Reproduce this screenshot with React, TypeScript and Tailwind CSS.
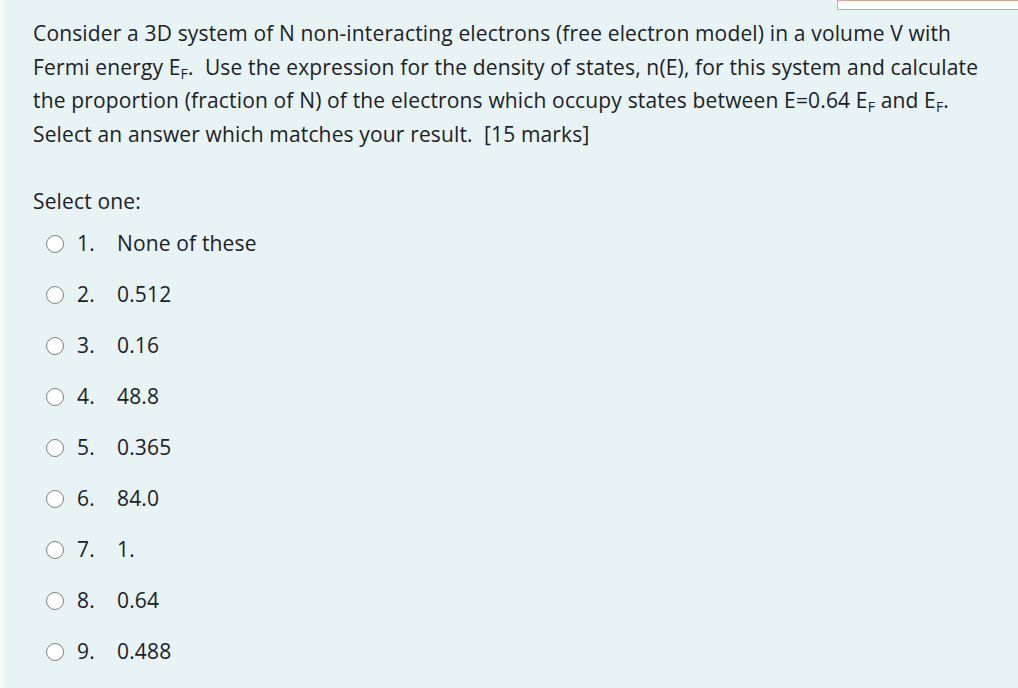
import React from "react";

const options = ["None of these", "0.512", "0.16", "48.8", "0.365", "84.0", "1.", "0.64", "0.488"];

function Sub({ children }: { children: React.ReactNode }) {
  return <span className="text-[14px] leading-none relative top-[4px]">{children}</span>;
}

export default function App() {
  return (
    <div
      className="w-[1018px] h-[688px] bg-[#e7f3f5] text-[#1d2125] overflow-hidden flex relative"
      style={{ fontFamily: '"Open Sans", "Noto Sans", sans-serif' }}
    >
      <div className="absolute top-0 left-[837px] w-[200px] h-[10px] bg-white border border-[#d9a59c]" />
      <div className="w-[4px] bg-[#f4f9fa] shrink-0" />
      <div className="pl-[29px] pt-[17px] flex flex-col">
        <div className="text-[21px] leading-[33.5px] tracking-[0.15px] w-[975px]">
          <div className="h-[33.5px]">Consider a 3D system of N non-interacting electrons (free electron model) in a volume V with</div>
          <div className="h-[33.5px]">
            Fermi energy E<Sub>F</Sub>.&nbsp; Use the expression for the density of states, n(E), for this system and calculate
          </div>
          <div className="h-[33.5px]">
            the proportion (fraction of N) of the electrons which occupy states between E=0.64 E<Sub>F</Sub> and E
            <Sub>F</Sub>.
          </div>
          <div className="h-[33.5px]">Select an answer which matches your result.&nbsp; [15 marks]</div>
        </div>
        <div className="text-[21px] tracking-[0.15px] mt-[33px] leading-[34px]">Select one:</div>
        <div className="flex flex-col mt-[0px]">
          {options.map((o, i) => (
            <div key={i} className="flex items-center h-[51px] text-[21px] tracking-[0.15px]">
              <div className="ml-[13px] w-[18px] h-[18px] rounded-full border-[1.5px] border-[#808080] bg-white" />
              <span className="ml-[13px] w-[40px]">{i + 1}.</span>
              <span>{o}</span>
            </div>
          ))}
        </div>
      </div>
    </div>
  );
}
